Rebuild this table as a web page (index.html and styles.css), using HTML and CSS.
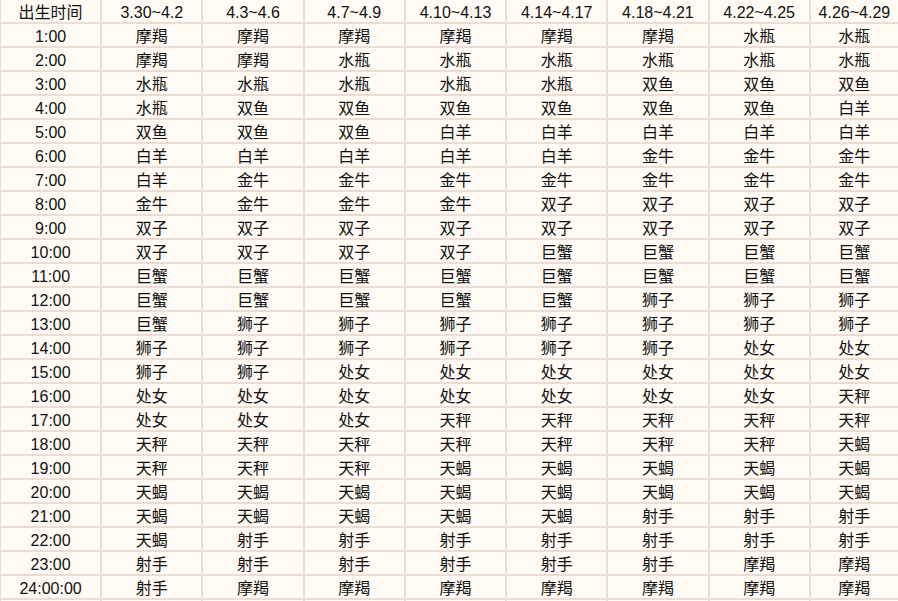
FILE: index.html
```html
<!DOCTYPE html>
<html lang="zh-CN">
<head>
<meta charset="utf-8">
<title>出生时间星座表</title>
<link rel="stylesheet" href="styles.css">
</head>
<body>
<table class="grid">
<colgroup>
<col class="c"><col class="c"><col class="c"><col class="c"><col class="c"><col class="c"><col class="c"><col class="c"><col class="last">
</colgroup>
<thead>
<tr class="head"><td>出生时间</td><td>3.30~4.2</td><td>4.3~4.6</td><td>4.7~4.9</td><td>4.10~4.13</td><td>4.14~4.17</td><td>4.18~4.21</td><td>4.22~4.25</td><td>4.26~4.29</td></tr>
</thead>
<tbody>
<tr><td>1:00</td><td>摩羯</td><td>摩羯</td><td>摩羯</td><td>摩羯</td><td>摩羯</td><td>摩羯</td><td>水瓶</td><td>水瓶</td></tr>
<tr><td>2:00</td><td>摩羯</td><td>摩羯</td><td>水瓶</td><td>水瓶</td><td>水瓶</td><td>水瓶</td><td>水瓶</td><td>水瓶</td></tr>
<tr><td>3:00</td><td>水瓶</td><td>水瓶</td><td>水瓶</td><td>水瓶</td><td>水瓶</td><td>双鱼</td><td>双鱼</td><td>双鱼</td></tr>
<tr><td>4:00</td><td>水瓶</td><td>双鱼</td><td>双鱼</td><td>双鱼</td><td>双鱼</td><td>双鱼</td><td>双鱼</td><td>白羊</td></tr>
<tr><td>5:00</td><td>双鱼</td><td>双鱼</td><td>双鱼</td><td>白羊</td><td>白羊</td><td>白羊</td><td>白羊</td><td>白羊</td></tr>
<tr><td>6:00</td><td>白羊</td><td>白羊</td><td>白羊</td><td>白羊</td><td>白羊</td><td>金牛</td><td>金牛</td><td>金牛</td></tr>
<tr><td>7:00</td><td>白羊</td><td>金牛</td><td>金牛</td><td>金牛</td><td>金牛</td><td>金牛</td><td>金牛</td><td>金牛</td></tr>
<tr><td>8:00</td><td>金牛</td><td>金牛</td><td>金牛</td><td>金牛</td><td>双子</td><td>双子</td><td>双子</td><td>双子</td></tr>
<tr><td>9:00</td><td>双子</td><td>双子</td><td>双子</td><td>双子</td><td>双子</td><td>双子</td><td>双子</td><td>双子</td></tr>
<tr><td>10:00</td><td>双子</td><td>双子</td><td>双子</td><td>双子</td><td>巨蟹</td><td>巨蟹</td><td>巨蟹</td><td>巨蟹</td></tr>
<tr><td>11:00</td><td>巨蟹</td><td>巨蟹</td><td>巨蟹</td><td>巨蟹</td><td>巨蟹</td><td>巨蟹</td><td>巨蟹</td><td>巨蟹</td></tr>
<tr><td>12:00</td><td>巨蟹</td><td>巨蟹</td><td>巨蟹</td><td>巨蟹</td><td>巨蟹</td><td>狮子</td><td>狮子</td><td>狮子</td></tr>
<tr><td>13:00</td><td>巨蟹</td><td>狮子</td><td>狮子</td><td>狮子</td><td>狮子</td><td>狮子</td><td>狮子</td><td>狮子</td></tr>
<tr><td>14:00</td><td>狮子</td><td>狮子</td><td>狮子</td><td>狮子</td><td>狮子</td><td>狮子</td><td>处女</td><td>处女</td></tr>
<tr><td>15:00</td><td>狮子</td><td>狮子</td><td>处女</td><td>处女</td><td>处女</td><td>处女</td><td>处女</td><td>处女</td></tr>
<tr><td>16:00</td><td>处女</td><td>处女</td><td>处女</td><td>处女</td><td>处女</td><td>处女</td><td>处女</td><td>天秤</td></tr>
<tr><td>17:00</td><td>处女</td><td>处女</td><td>处女</td><td>天秤</td><td>天秤</td><td>天秤</td><td>天秤</td><td>天秤</td></tr>
<tr><td>18:00</td><td>天秤</td><td>天秤</td><td>天秤</td><td>天秤</td><td>天秤</td><td>天秤</td><td>天秤</td><td>天蝎</td></tr>
<tr><td>19:00</td><td>天秤</td><td>天秤</td><td>天秤</td><td>天蝎</td><td>天蝎</td><td>天蝎</td><td>天蝎</td><td>天蝎</td></tr>
<tr><td>20:00</td><td>天蝎</td><td>天蝎</td><td>天蝎</td><td>天蝎</td><td>天蝎</td><td>天蝎</td><td>天蝎</td><td>天蝎</td></tr>
<tr><td>21:00</td><td>天蝎</td><td>天蝎</td><td>天蝎</td><td>天蝎</td><td>天蝎</td><td>射手</td><td>射手</td><td>射手</td></tr>
<tr><td>22:00</td><td>天蝎</td><td>射手</td><td>射手</td><td>射手</td><td>射手</td><td>射手</td><td>射手</td><td>射手</td></tr>
<tr><td>23:00</td><td>射手</td><td>射手</td><td>射手</td><td>射手</td><td>射手</td><td>射手</td><td>摩羯</td><td>摩羯</td></tr>
<tr><td>24:00:00</td><td>射手</td><td>摩羯</td><td>摩羯</td><td>摩羯</td><td>摩羯</td><td>摩羯</td><td>摩羯</td><td>摩羯</td></tr>
<tr class="tail"><td></td><td></td><td></td><td></td><td></td><td></td><td></td><td></td><td></td></tr>
</tbody>
</table>
</body>
</html>
```

FILE: styles.css
```css
html, body {
  margin: 0;
  padding: 0;
  overflow: hidden;
  background: #fffaf3;
}

.grid {
  margin: -2px 0 0 -1px;
  border-collapse: separate;
  border-spacing: 2px;
  table-layout: fixed;
  width: 901px;
  background: #eedcd4;
  font-family: "Liberation Sans", "Noto Sans CJK SC", sans-serif;
  font-size: 16px;
  color: #111;
}

.grid col.c { width: 99px; }
.grid col.last { width: 87px; }

.grid td {
  height: 18px;
  padding: 4px 0 0;
  background: #fffaf3;
  text-align: center;
  vertical-align: middle;
  line-height: 18px;
  white-space: nowrap;
  overflow: hidden;
}
```
